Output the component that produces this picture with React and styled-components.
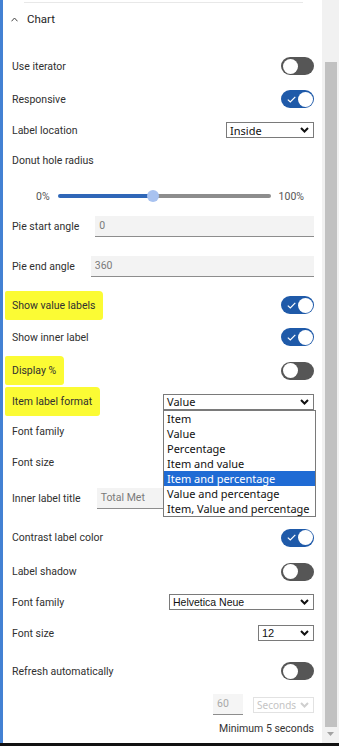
import React from "react";
import styled, { createGlobalStyle } from "styled-components";

const GlobalStyle = createGlobalStyle`
  html, body { margin: 0; padding: 0; background: #fff; }
  body { font-family: Roboto, "Noto Sans", sans-serif; }
  * { box-sizing: border-box; }
`;

const Page = styled.div`
  width: 339px;
  height: 746px;
  display: flex;
  flex-direction: column;
  overflow: hidden;
  background: #fff;
`;

const Main = styled.div`
  flex: 1;
  min-height: 0;
  display: flex;
`;

const Accent = styled.div`
  width: 3px;
  flex-shrink: 0;
  background: #4381d3;
`;

const Panel = styled.div`
  flex: 1;
  min-width: 0;
  position: relative;
  display: flex;
  flex-direction: column;
  padding: 0 8px 0 9px;
  color: #303030;
`;

const Scrollbar = styled.div`
  width: 17px;
  flex-shrink: 0;
  background: #f1f1f1;
  display: flex;
  flex-direction: column;
  align-items: center;
`;

const ScrollThumb = styled.div`
  width: 12px;
  margin-top: 62px;
  height: 665px;
  background: #c1c1c1;
`;

const ScrollArrow = styled.svg`
  margin-top: 5px;
`;

const BottomRule = styled.div`
  height: 3px;
  background: #111;
  flex-shrink: 0;
`;

const TopRule = styled.div`
  height: 1px;
  background: #e8e8e8;
  margin: 2px 11px 0 12px;
`;

const Header = styled.div`
  height: 32px;
  display: flex;
  align-items: center;
  gap: 9px;
  margin: 0 0 15px -1px;
  font-size: 11.5px;
  color: #1e1e1e;
`;

const Row = styled.div`
  height: ${(p) => p.$h}px;
  flex-shrink: 0;
  display: flex;
  align-items: ${(p) => p.$align || "center"};
  justify-content: space-between;
`;

const Label = styled.span`
  font-size: 10.5px;
  line-height: 21px;
  color: #303030;
  white-space: nowrap;
  ${(p) =>
    p.$mark &&
    `
    background: #fbfb34;
    padding: 4px 8px 4px 7px;
    margin-left: -7px;
    border-radius: 2px 4px 3px 2px;
  `}
`;

const ToggleTrack = styled.span`
  width: 33px;
  height: 18px;
  border-radius: 9px;
  flex-shrink: 0;
  background: ${(p) => (p.$on ? "#1f5aa9" : "#565656")};
  display: inline-flex;
  align-items: center;
  justify-content: ${(p) => (p.$on ? "space-between" : "flex-start")};
  padding: ${(p) => (p.$on ? "0 1.5px 0 6px" : "0 1.5px")};
`;

const Knob = styled.span`
  width: 15px;
  height: 15px;
  border-radius: 50%;
  background: #fff;
`;

const Toggle = ({ on }) => (
  <ToggleTrack $on={on}>
    {on && (
      <svg width="9" height="7" viewBox="0 0 9 7">
        <path d="M0.8 3.6 L3.3 6 L8.3 0.8" fill="none" stroke="#fff" strokeWidth="1.2" />
      </svg>
    )}
    <Knob />
  </ToggleTrack>
);

const SelectBox = styled.div`
  width: ${(p) => p.$w}px;
  height: 16px;
  border: 1px solid ${(p) => (p.$disabled ? "#e2e2e2" : "#7a7a7a")};
  background: #fff;
  display: flex;
  align-items: center;
  justify-content: space-between;
  padding: 0 4px 0 3px;
  font-family: ${(p) => p.$font || '"Noto Sans", sans-serif'};
  font-size: ${(p) => p.$size || 11}px;
  color: ${(p) => (p.$disabled ? "#c4c4c4" : "#111")};
  white-space: nowrap;
`;

const Chevron = ({ color = "#111" }) => (
  <svg width="9" height="6" viewBox="0 0 9 6">
    <path d="M1 1 L4.5 4.5 L8 1" fill="none" stroke={color} strokeWidth="2" />
  </svg>
);

const Select = ({ w, value, font, size, disabled }) => (
  <SelectBox $w={w} $font={font} $size={size} $disabled={disabled}>
    <span>{value}</span>
    <Chevron color={disabled ? "#cfcfcf" : "#111"} />
  </SelectBox>
);

const SelectWrap = styled.div`
  position: relative;
`;

const OptionList = styled.ul`
  position: absolute;
  top: 100%;
  left: 0;
  width: 153px;
  margin: 0;
  padding: 0;
  list-style: none;
  border: 1px solid #7a7a7a;
  background: #fff;
  font-family: "Noto Sans", sans-serif;
  font-size: 11px;
  line-height: 15px;
  color: #111;
  z-index: 5;
`;

const Option = styled.li`
  padding: 0 3px;
  white-space: nowrap;
  background: ${(p) => (p.$selected ? "#1f6bd4" : "transparent")};
  color: ${(p) => (p.$selected ? "#fff" : "#111")};
`;

const TextInput = styled.div`
  flex: 1;
  height: 21px;
  margin-left: 16px;
  background: #f3f3f3;
  border-bottom: 1px solid #8d8d8d;
  padding: 0 4px;
  font-size: 10.5px;
  line-height: 20px;
  color: #7a7a7a;
`;

const SliderRow = styled.div`
  height: 40px;
  flex-shrink: 0;
  display: flex;
  align-items: center;
  gap: 8px;
  padding: 0 10px 0 24px;
`;

const SliderEnd = styled.span`
  font-size: 10.5px;
  color: #555;
`;

const Track = styled.div`
  flex: 1;
  display: flex;
  align-items: center;
`;

const TrackFill = styled.div`
  height: 4px;
  background: #2f67b8;
  border-radius: 2px 0 0 2px;
`;

const TrackRest = styled.div`
  flex: 1;
  height: 4px;
  background: #8d8d8d;
  border-radius: 0 2px 2px 0;
`;

const Thumb = styled.div`
  width: 12px;
  height: 12px;
  border-radius: 50%;
  background: #a8c2f0;
  margin: 0 -6px;
  position: relative;
  z-index: 1;
`;

const IntervalRow = styled.div`
  height: 21px;
  flex-shrink: 0;
  display: flex;
  justify-content: flex-end;
  align-items: center;
  gap: 10px;
`;

const SmallInput = styled.div`
  width: 30px;
  height: 21px;
  background: #f5f5f5;
  border-bottom: 1px solid #8d8d8d;
  padding: 0 4px;
  font-size: 10.5px;
  line-height: 20px;
  color: #a9a9a9;
`;

const Hint = styled.div`
  text-align: right;
  font-size: 10.5px;
  color: #333;
  padding-top: 7px;
`;

const options = [
  "Item",
  "Value",
  "Percentage",
  "Item and value",
  "Item and percentage",
  "Value and percentage",
  "Item, Value and percentage",
];

export default function App() {
  const donut = 0.45;
  return (
    <Page>
      <GlobalStyle />
      <Main>
        <Accent />
        <Panel>
          <TopRule />
          <Header>
            <svg width="7" height="5" viewBox="0 0 7 5">
              <path d="M0.5 4.3 L3.5 1 L6.5 4.3" fill="none" stroke="#444" strokeWidth="1" />
            </svg>
            <span>Chart</span>
          </Header>

          <Row $h={32}>
            <Label>Use iterator</Label>
            <Toggle on={false} />
          </Row>
          <Row $h={34}>
            <Label>Responsive</Label>
            <Toggle on />
          </Row>
          <Row $h={28}>
            <Label>Label location</Label>
            <Select w={88} value="Inside" />
          </Row>
          <Row $h={32}>
            <Label>Donut hole radius</Label>
          </Row>
          <SliderRow>
            <SliderEnd>0%</SliderEnd>
            <Track>
              <TrackFill style={{ width: `${donut * 100}%` }} />
              <Thumb />
              <TrackRest />
            </Track>
            <SliderEnd>100%</SliderEnd>
          </SliderRow>
          <Row $h={40} $align="flex-start">
            <Label>Pie start angle</Label>
            <TextInput>0</TextInput>
          </Row>
          <Row $h={34} $align="flex-start">
            <Label>Pie end angle</Label>
            <TextInput>360</TextInput>
          </Row>
          <Row $h={30}>
            <Label $mark>Show value labels</Label>
            <Toggle on />
          </Row>
          <Row $h={34}>
            <Label>Show inner label</Label>
            <Toggle on />
          </Row>
          <Row $h={33}>
            <Label $mark>Display %</Label>
            <Toggle on={false} />
          </Row>
          <Row $h={29}>
            <Label $mark>Item label format</Label>
            <SelectWrap>
              <Select w={151} value="Value" />
              <OptionList>
                {options.map((o) => (
                  <Option key={o} $selected={o === "Item and percentage"}>
                    {o}
                  </Option>
                ))}
              </OptionList>
            </SelectWrap>
          </Row>
          <Row $h={31}>
            <Label>Font family</Label>
          </Row>
          <Row $h={31}>
            <Label>Font size</Label>
          </Row>
          <Row $h={40}>
            <Label>Inner label title</Label>
            <TextInput>Total Met</TextInput>
          </Row>
          <Row $h={39}>
            <Label>Contrast label color</Label>
            <Toggle on />
          </Row>
          <Row $h={29}>
            <Label>Label shadow</Label>
            <Toggle on={false} />
          </Row>
          <Row $h={32}>
            <Label>Font family</Label>
            <Select w={145} value="Helvetica Neue" font='"Liberation Sans", Arial, sans-serif' size={10.5} />
          </Row>
          <Row $h={30}>
            <Label>Font size</Label>
            <Select w={56} value="12" font='"Liberation Sans", Arial, sans-serif' size={11} />
          </Row>
          <Row $h={46}>
            <Label>Refresh automatically</Label>
            <Toggle on={false} />
          </Row>
          <IntervalRow>
            <SmallInput>60</SmallInput>
            <Select w={61} value="Seconds" size={10} disabled />
          </IntervalRow>
          <Hint>Minimum 5 seconds</Hint>
        </Panel>
        <Scrollbar>
          <ScrollThumb />
          <ScrollArrow width="7" height="4" viewBox="0 0 7 4">
            <path d="M0 0 L7 0 L3.5 4 Z" fill="#a3a3a3" />
          </ScrollArrow>
        </Scrollbar>
      </Main>
      <BottomRule />
    </Page>
  );
}
